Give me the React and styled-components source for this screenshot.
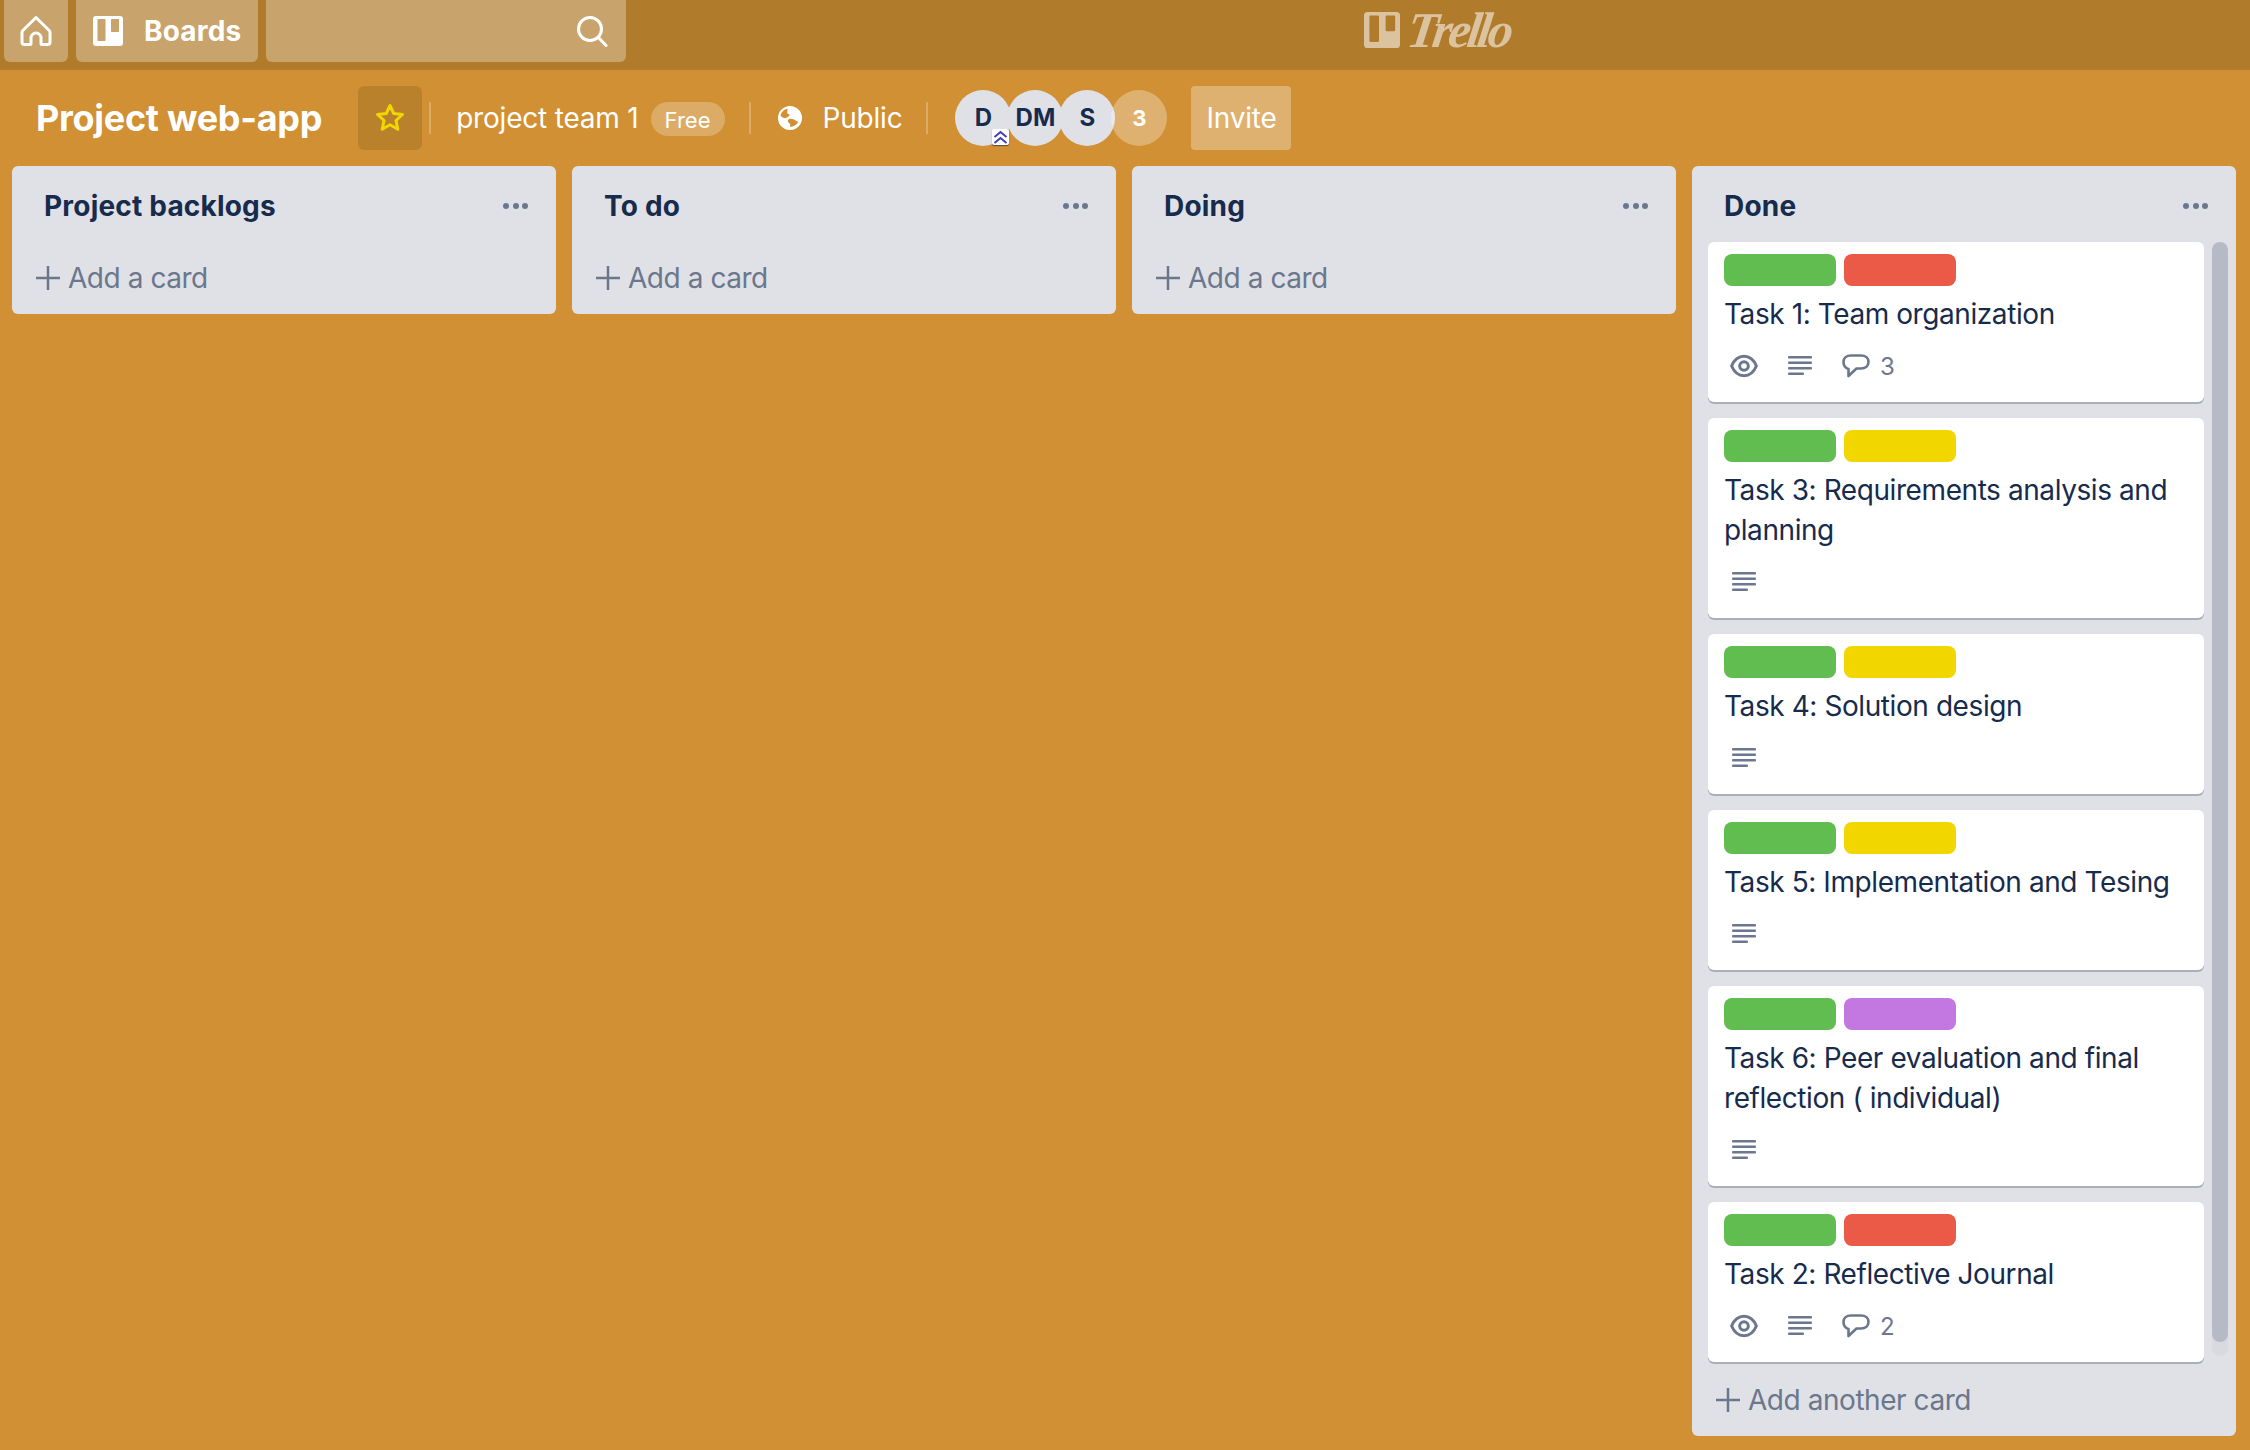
import React from "react";
import styled, { createGlobalStyle } from "styled-components";

const GlobalStyle = createGlobalStyle`
  html, body {
    margin: 0;
    padding: 0;
    height: 100%;
    overflow: hidden;
  }
  body {
    font-family: Inter, "Liberation Sans", sans-serif;
    color: #172b4d;
  }
  * {
    box-sizing: border-box;
  }
`;

const Page = styled.div`
  width: 2250px;
  height: 1450px;
  background: #d09033;
  display: flex;
  flex-direction: column;
`;

const TopBar = styled.header`
  height: 70px;
  background: #b17b2c;
  padding: 0 4px;
  display: flex;
  gap: 8px;
`;

const TopButton = styled.div`
  height: 62px;
  background: rgba(255, 255, 255, 0.3);
  border-radius: 0 0 6px 6px;
  display: flex;
  align-items: center;
  color: #fff;
`;

const HomeButton = styled(TopButton)`
  width: 64px;
  justify-content: center;
`;

const BoardsButton = styled(TopButton)`
  width: 182px;
  padding-left: 17px;
  gap: 21px;
  font-size: 28px;
  font-weight: 700;
  letter-spacing: 0.2px;
`;

const SearchBox = styled(TopButton)`
  width: 360px;
  justify-content: flex-end;
  padding-right: 18px;
`;

const LogoWrap = styled.div`
  flex: 1;
  height: 60px;
  padding-right: 6px;
  display: flex;
  align-items: center;
  justify-content: center;
  gap: 8px;
  color: rgba(255, 255, 255, 0.55);
`;

const LogoText = styled.span`
  font-family: "Liberation Serif", serif;
  font-style: italic;
  font-weight: 700;
  font-size: 50px;
  line-height: 60px;
  letter-spacing: -3.5px;
  transform: skewX(-8deg);
`;

const BoardBar = styled.div`
  height: 96px;
  padding: 16px 0 0 36px;
  display: flex;
  align-items: flex-start;
  color: #fff;
`;

const BoardTitle = styled.h1`
  margin: 0 36px 0 0;
  font-size: 36px;
  font-weight: 700;
  line-height: 64px;
  letter-spacing: -0.3px;
`;

const StarButton = styled.div`
  width: 64px;
  height: 64px;
  border-radius: 6px;
  background: rgba(0, 0, 0, 0.1);
  display: flex;
  align-items: center;
  justify-content: center;
`;

const Divider = styled.span`
  width: 2px;
  height: 32px;
  margin: 16px ${(p) => p.$right || 0}px 0 ${(p) => p.$left || 0}px;
  background: rgba(255, 255, 255, 0.25);
`;

const BarText = styled.span`
  font-size: 28px;
  line-height: 64px;
  letter-spacing: -0.2px;
`;

const FreePill = styled.span`
  width: 74px;
  height: 34px;
  margin: 16px 24px 0 12px;
  border-radius: 17px;
  background: rgba(255, 255, 255, 0.25);
  font-size: 22px;
  line-height: 36px;
  text-align: center;
`;

const GlobeSlot = styled.span`
  height: 64px;
  margin: 0 21px 0 27px;
  display: flex;
  align-items: center;
`;

const Members = styled.div`
  margin: 4px 24px 0 27px;
  display: flex;
`;

const Avatar = styled.div`
  position: relative;
  width: 56px;
  height: 56px;
  margin-left: -4px;
  border-radius: 50%;
  background: ${(p) => (p.$more ? "rgba(255, 255, 255, 0.3)" : "#dfe1e6")};
  color: ${(p) => (p.$more ? "#fff" : "#172b4d")};
  font-size: ${(p) => (p.$more ? 22 : 24)}px;
  font-weight: 700;
  line-height: 56px;
  text-align: center;
  &:first-child {
    margin-left: 0;
  }
`;

const AdminBadge = styled.span`
  position: absolute;
  left: 37px;
  top: 39px;
  width: 17px;
  height: 16px;
  background: #fff;
  border-radius: 2px;
  box-shadow: 0 1px 1px rgba(9, 30, 66, 0.6);
  display: flex;
  align-items: center;
  justify-content: center;
`;

const InviteButton = styled.div`
  width: 100px;
  height: 64px;
  border-radius: 4px;
  background: rgba(255, 255, 255, 0.3);
  font-size: 28px;
  line-height: 64px;
  letter-spacing: -0.2px;
  text-align: center;
`;

const Board = styled.main`
  padding: 0 12px;
  display: flex;
  align-items: flex-start;
  gap: 16px;
`;

const List = styled.section`
  width: 544px;
  background: #dfe1e6;
  border-radius: 6px;
`;

const ListHeader = styled.div`
  height: 76px;
  padding: 4px 28px 0 32px;
  display: flex;
  align-items: center;
  justify-content: space-between;
`;

const ListTitle = styled.h2`
  margin: 0;
  font-size: 28px;
  font-weight: 700;
  letter-spacing: 0.2px;
  color: #172b4d;
`;

const MoreDots = styled.span`
  width: 25px;
  display: flex;
  justify-content: space-between;
  & > i {
    width: 6px;
    height: 6px;
    border-radius: 50%;
    background: #6b778c;
  }
`;

const AddRow = styled.div`
  height: 72px;
  padding-left: 24px;
  display: flex;
  align-items: center;
  gap: 8px;
  font-size: 28px;
  letter-spacing: -0.45px;
  color: #6b778c;
`;

const CardsArea = styled.div`
  padding: 0 8px 2px 16px;
  display: flex;
  gap: 8px;
`;

const CardColumn = styled.div`
  width: 496px;
  display: flex;
  flex-direction: column;
  gap: 16px;
`;

const ScrollTrack = styled.div`
  width: 16px;
  height: 1114px;
  border-radius: 8px;
  background: #d8dae0;
`;

const ScrollThumb = styled.div`
  height: 1100px;
  border-radius: 8px;
  background: #b5bac6;
`;

const Card = styled.article`
  background: #fff;
  border-radius: 6px;
  padding: 12px 16px 16px;
  box-shadow: 0 2px 0 #a9aebb;
`;

const Labels = styled.div`
  display: flex;
  gap: 8px;
  margin-bottom: 8px;
`;

const Label = styled.span`
  width: 112px;
  height: 32px;
  border-radius: 8px;
  background: ${(p) => p.$color};
`;

const CardTitle = styled.div`
  font-size: 28px;
  line-height: 40px;
  letter-spacing: -0.42px;
  color: #172b4d;
`;

const Badges = styled.div`
  margin-top: 12px;
  height: 40px;
  display: flex;
  align-items: center;
  gap: 16px;
  color: #6b778c;
`;

const Badge = styled.span`
  width: 40px;
  height: 40px;
  display: flex;
  align-items: center;
  justify-content: center;
`;

const CommentBadge = styled.span`
  display: flex;
  align-items: center;
  font-size: 24px;
`;

const Count = styled.span`
  margin-left: 4px;
`;

const HomeIcon = () => (
  <svg width="32" height="32" viewBox="0 0 32 32" fill="none" stroke="currentColor" strokeWidth="3" strokeLinejoin="round">
    <path d="M16 2.500 2.800 15.500c-.6.6-.8 1.200-.8 2V27c0 1.400 1 2.500 2.500 2.500H10c.6 0 1-.4 1-1V23a5 5 0 0 1 10 0v5.500c0 .6.4 1 1 1h5.500c1.500 0 2.500-1.100 2.500-2.500v-9.500c0-.8-.2-1.400-.8-2Z" />
  </svg>
);

const BoardIcon = ({ size }) => (
  <svg width={size} height={size} viewBox="0 0 30 30" fill="currentColor">
    <path
      fillRule="evenodd"
      d="M3 0h24a3 3 0 0 1 3 3v24a3 3 0 0 1-3 3H3a3 3 0 0 1-3-3V3a3 3 0 0 1 3-3Zm1.500 4v20c0 .6.4 1 1 1h6c.6 0 1-.4 1-1V4c0-.6-.4-1-1-1h-6c-.6 0-1 .4-1 1Zm13.500 0v11c0 .6.4 1 1 1h6c.6 0 1-.4 1-1V4c0-.6-.4-1-1-1h-6c-.6 0-1 .4-1 1Z"
    />
  </svg>
);

const SearchIcon = () => (
  <svg width="32" height="32" viewBox="0 0 32 32" fill="none" stroke="currentColor" strokeWidth="3" strokeLinecap="round">
    <circle cx="14" cy="14" r="11.500" />
    <path d="m22.500 22.500 7.500 8" />
  </svg>
);

const StarIcon = () => (
  <svg width="30" height="30" viewBox="0 0 30 30" fill="none" stroke="#f2d600" strokeWidth="3" strokeLinejoin="round">
    <path d="m15 2.500 3.700 8 8.800 1-6.500 6 1.800 8.700-7.800-4.400-7.800 4.400L9 17.500l-6.500-6 8.800-1Z" />
  </svg>
);

const GlobeIcon = () => (
  <svg width="24" height="24" viewBox="0 0 24 24" fill="#fff">
    <path
      fillRule="evenodd"
      d="M12 0a12 12 0 1 1 0 24 12 12 0 0 1 0-24ZM9.500 2.800C6 3.500 3.300 6 2.500 9.500c1.600 2 3.900 3 5.700 2.600 1-1.500 3-1.600 3.600-3.200-1.400-1-3-1.400-2.600-3.200.2-.9.600-1.700.3-2.900Zm6.300 10.600c-1.800-1-5-1.100-5.900.8-.6 1.600 1 2.400 1.800 3.400.7 1 .5 2.300.6 3.300 3.300-.1 6.200-2 7.900-4.900-1.400-.8-3-1.700-4.400-2.600Z"
    />
  </svg>
);

const AdminIcon = () => (
  <svg width="15" height="15" viewBox="0 0 15 15" fill="none" stroke="#3f3fb0" strokeWidth="2">
    <path d="m1.500 7 6-5 6 5M1.500 13l6-5 6 5" />
  </svg>
);

const PlusIcon = () => (
  <svg width="24" height="24" viewBox="0 0 24 24" fill="none" stroke="currentColor" strokeWidth="2.500">
    <path d="M12 0v24M0 12h24" />
  </svg>
);

const EyeIcon = () => (
  <svg width="28" height="24" viewBox="0 0 26 22" fill="none" stroke="currentColor" strokeWidth="2.800">
    <path d="M1.500 11C4 5 8 2 13 2s9 3 11.500 9C22 17 18 20 13 20S4 17 1.500 11Z" />
    <circle cx="13" cy="11" r="4" />
  </svg>
);

const DescriptionIcon = () => (
  <svg width="24" height="20" viewBox="0 0 24 20" fill="currentColor">
    <rect y="0" width="24" height="2.500" rx="1" />
    <rect y="5.500" width="24" height="2.500" rx="1" />
    <rect y="11" width="24" height="2.500" rx="1" />
    <rect y="16.500" width="16" height="2.500" rx="1" />
  </svg>
);

const CommentIcon = () => (
  <svg width="28" height="24" viewBox="0 0 28 24" fill="none" stroke="currentColor" strokeWidth="2.600" strokeLinejoin="round">
    <path d="M9 1.500h10c4.500 0 7.500 2.700 7.500 6.500s-3 6.500-7.500 6.500h-4.500L6.500 22V15C3 14 1.500 11.500 1.500 8c0-3.800 3-6.500 7.500-6.500Z" />
  </svg>
);

const GREEN = "#61bd4f";
const RED = "#eb5a46";
const YELLOW = "#f2d600";
const PURPLE = "#c377e0";

const tasks = [
  { title: "Task 1: Team organization", color: RED, comments: 3 },
  { title: "Task 3: Requirements analysis and planning", color: YELLOW },
  { title: "Task 4: Solution design", color: YELLOW },
  { title: "Task 5: Implementation and Tesing", color: YELLOW },
  { title: "Task 6: Peer evaluation and final reflection ( individual)", color: PURPLE },
  { title: "Task 2: Reflective Journal", color: RED, comments: 2 },
];

const emptyLists = ["Project backlogs", "To do", "Doing"];

const ListTop = ({ title }) => (
  <ListHeader>
    <ListTitle>{title}</ListTitle>
    <MoreDots>
      <i />
      <i />
      <i />
    </MoreDots>
  </ListHeader>
);

const TaskCard = ({ task }) => (
  <Card>
    <Labels>
      <Label $color={GREEN} />
      <Label $color={task.color} />
    </Labels>
    <CardTitle>{task.title}</CardTitle>
    <Badges>
      {task.comments && (
        <Badge>
          <EyeIcon />
        </Badge>
      )}
      <Badge>
        <DescriptionIcon />
      </Badge>
      {task.comments && (
        <CommentBadge>
          <Badge>
            <CommentIcon />
          </Badge>
          <Count>{task.comments}</Count>
        </CommentBadge>
      )}
    </Badges>
  </Card>
);

const App = () => {
  return (
    <Page>
      <GlobalStyle />
      <TopBar>
        <HomeButton>
          <HomeIcon />
        </HomeButton>
        <BoardsButton>
          <BoardIcon size={30} />
          Boards
        </BoardsButton>
        <SearchBox>
          <SearchIcon />
        </SearchBox>
        <LogoWrap>
          <BoardIcon size={36} />
          <LogoText>Trello</LogoText>
        </LogoWrap>
      </TopBar>
      <BoardBar>
        <BoardTitle>Project web-app</BoardTitle>
        <StarButton>
          <StarIcon />
        </StarButton>
        <Divider $left={7} $right={25} />
        <BarText>project team 1</BarText>
        <FreePill>Free</FreePill>
        <Divider />
        <GlobeSlot>
          <GlobeIcon />
        </GlobeSlot>
        <BarText>Public</BarText>
        <Divider $left={24} />
        <Members>
          <Avatar>
            D
            <AdminBadge>
              <AdminIcon />
            </AdminBadge>
          </Avatar>
          <Avatar>DM</Avatar>
          <Avatar>S</Avatar>
          <Avatar $more>3</Avatar>
        </Members>
        <InviteButton>Invite</InviteButton>
      </BoardBar>
      <Board>
        {emptyLists.map((title) => (
          <List key={title}>
            <ListTop title={title} />
            <AddRow>
              <PlusIcon />
              Add a card
            </AddRow>
          </List>
        ))}
        <List>
          <ListTop title="Done" />
          <CardsArea>
            <CardColumn>
              {tasks.map((task) => (
                <TaskCard key={task.title} task={task} />
              ))}
            </CardColumn>
            <ScrollTrack>
              <ScrollThumb />
            </ScrollTrack>
          </CardsArea>
          <AddRow>
            <PlusIcon />
            Add another card
          </AddRow>
        </List>
      </Board>
    </Page>
  );
};

export default App;
